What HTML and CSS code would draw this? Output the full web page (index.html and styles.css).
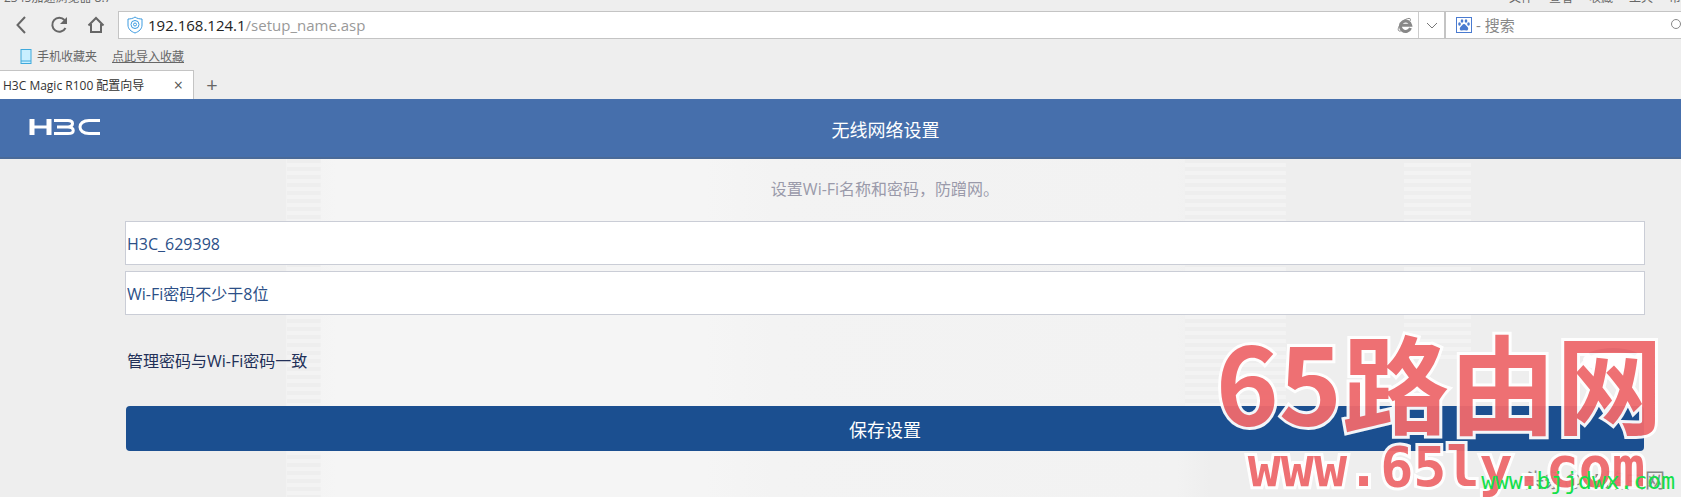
FILE: index.html
```html
<!DOCTYPE html>
<html lang="zh-CN">

<head>
    <meta charset="utf-8">
    <meta name="viewport" content="width=device-width, initial-scale=1.0">
    <title>H3C Magic R100 配置向导</title>
    <link rel="stylesheet" href="styles.css">
</head>

<body>
    <div class="browser">
        <div class="titlebar">
            <span>2345加速浏览器 8.7</span>
            <nav class="menu"><a href="#">文件</a><a href="#">查看</a><a href="#">收藏</a><a href="#">工具</a><a href="#">帮助</a></nav>
        </div>
        <div class="toolbar">
            <div class="nav">
                <button type="button" aria-label="后退"><svg width="18" height="18" viewBox="0 0 18 18"><path d="M12 1L4.500 9l7.500 8" /></svg></button>
                <button type="button" aria-label="刷新"><svg width="18" height="18" viewBox="0 0 18 18"><path d="M14.500 4A7 7 0 1 0 15.500 12" /><path class="solid" d="M17 1v7h-7z" /></svg></button>
                <button type="button" aria-label="主页"><svg width="18" height="18" viewBox="0 0 18 18"><path d="M1.500 9.500L9 2l7.500 7.500M4 8v8h10V8" /></svg></button>
            </div>
            <div class="address">
                <svg class="shield" width="16" height="18" viewBox="0 0 16 18"><path d="M8 1c2 1.500 4.500 2 7 2v6c0 4-3 6.500-7 8-4-1.500-7-4-7-8V3c2.500 0 5-.5 7-2z" /><circle cx="8" cy="8.500" r="4" /><circle cx="8" cy="8.500" r="1.500" /></svg>
                <span class="url"><b>192.168.124.1</b>/setup_name.asp</span>
                <svg class="core" width="16" height="16" viewBox="0 0 16 16"><path d="M13.500 11A5.200 5.200 0 1 1 13.700 8.200H4" /><path class="orbit" d="M13 4c2-4-3-3-7 0-4 4-6 9-4 10 1 .5 3-.5 4-1.500" /></svg>
                <button class="drop" type="button" aria-label="历史网址"><svg width="12" height="8" viewBox="0 0 12 8"><path d="M1 1l5 5 5-5" /></svg></button>
            </div>
            <div class="search">
                <svg class="paw" width="16" height="16" viewBox="0 0 16 16"><rect x=".5" y=".5" width="15" height="15" /><ellipse cx="3.500" cy="7" rx="1.300" ry="1.800" /><ellipse cx="6" cy="4" rx="1.300" ry="1.800" /><ellipse cx="10" cy="4" rx="1.300" ry="1.800" /><ellipse cx="12.500" cy="7" rx="1.300" ry="1.800" /><path d="M8 7c1.500 0 2.300 2 3.500 3 1.500 1.500.5 4-1.500 3.500-1.300-.4-2.700-.4-4 0-2 .5-3-2-1.500-3.500C5.700 9 6.500 7 8 7z" /></svg>
                <span>-</span>
                <input type="text" placeholder="搜索" aria-label="搜索">
                <svg class="glass" width="11" height="14" viewBox="0 0 11 14"><circle cx="6" cy="6" r="4.500" /></svg>
            </div>
        </div>
        <div class="bookmarks">
            <svg width="12" height="15" viewBox="0 0 12 15"><rect x="1" y=".5" width="10" height="14" /><path d="M1 12h10" /></svg>
            <a href="#">手机收藏夹</a>
            <a class="import" href="#">点此导入收藏</a>
        </div>
        <div class="tabs">
            <div class="tab"><span>H3C Magic R100 配置向导</span><button type="button" aria-label="关闭">×</button></div>
            <button class="add" type="button" aria-label="新标签页">+</button>
        </div>
    </div>

    <header class="header">
        <svg class="logo" width="74" height="18" viewBox="0 0 74 18" role="img" aria-label="H3C"><path class="stem" d="M4 1v16M21 1v16" /><path d="M4 9h17M26 2.500h14c6 0 6 6 0 6.500H29M40 9c7 .5 7 6.500 0 6.500H26M72 2.500H61c-12 0-12 13 0 13h11" /></svg>
        <h1>无线网络设置</h1>
    </header>

    <main class="page">
        <form class="setup">
            <p class="tip">设置Wi-Fi名称和密码，防蹭网。</p>
            <input class="field" type="text" value="H3C_629398" aria-label="Wi-Fi名称">
            <input class="field" type="text" placeholder="Wi-Fi密码不少于8位" aria-label="Wi-Fi密码">
            <div class="same">
                <label for="same">管理密码与Wi-Fi密码一致</label>
                <input id="same" type="checkbox" checked>
            </div>
            <button class="save" type="submit">保存设置</button>
        </form>
    </main>

    <div class="source">头条@65路由网</div>
    <div class="mark">
        <div class="mark-name"><span>65</span><span>路</span><span>由</span><span>网</span></div>
        <div class="mark-url">www.65ly.com</div>
    </div>
    <div class="stamp">www.bjjdwx.com</div>
</body>

</html>
```
FILE: styles.css
```css
* {
    box-sizing: border-box;
}

body {
    position: relative;
    display: flex;
    flex-direction: column;
    min-height: 100vh;
    margin: 0;
    overflow: hidden;
    background: #eee;
    font-family: "Open Sans", "Noto Sans CJK SC", sans-serif;
}

button,
input {
    padding: 0;
    border: 0;
    background: none;
    font: inherit;
    outline: none;
}

a {
    color: inherit;
    text-decoration: none;
}

svg {
    flex: none;
    fill: none;
}

/* browser */
.browser {
    color: #666;
    font-size: 12px;
}

.titlebar {
    display: flex;
    justify-content: space-between;
    align-items: flex-end;
    height: 4px;
    margin-bottom: 7px;
    padding-left: 4px;
    overflow: hidden;
    line-height: 12px;
}

.menu {
    display: flex;
    gap: 16px;
    margin-right: -12px;
}

.toolbar {
    display: flex;
    height: 28px;
}

.nav {
    display: flex;
    align-items: center;
    gap: 19px;
    width: 118px;
    padding-left: 13px;
}

.nav button {
    height: 18px;
}

.nav svg {
    stroke: #666;
    stroke-width: 2;
}

.nav .solid {
    fill: #666;
    stroke: none;
}

.address,
.search {
    display: flex;
    align-items: center;
    border: 1px solid #c4c4c4;
    background: #fff;
}

.address {
    flex: 1;
    padding-left: 8px;
}

.shield {
    stroke: #3d9be0;
}

.url {
    flex: 1;
    margin-left: 5px;
    color: #999;
    font-size: 15px;
}

.url b {
    color: #222;
    font-weight: normal;
}

.core {
    margin-right: 5px;
    stroke: #888;
    stroke-width: 3;
}

.core .orbit {
    stroke-width: 1;
}

.drop {
    width: 26px;
    height: 26px;
    border-left: 1px solid #ccc;
}

.drop svg {
    stroke: #777;
}

.search {
    gap: 4px;
    width: 236px;
    padding-left: 10px;
    border-right: 0;
    color: #888;
    font-size: 15px;
}

.search input {
    flex: 1;
    min-width: 0;
}

.search input::placeholder {
    color: #888;
}

.paw {
    fill: #4a7bd0;
}

.paw rect {
    fill: #fff;
    stroke: #4a7bd0;
}

.glass {
    stroke: #888;
}

.bookmarks {
    display: flex;
    align-items: center;
    height: 31px;
    padding: 3px 0 0 20px;
}

.bookmarks svg {
    margin-right: 5px;
    fill: #c9efff;
    stroke: #3fa9dc;
}

.import {
    margin-left: 15px;
    text-decoration: underline;
}

.tabs {
    display: flex;
    height: 29px;
}

.tab {
    display: flex;
    justify-content: space-between;
    align-items: center;
    width: 194px;
    padding: 0 10px 0 3px;
    border: 1px solid #c4c4c4;
    border-width: 1px 1px 0 0;
    background: #fff;
    color: #333;
}

.tab button {
    color: #555;
    font-size: 16px;
}

.add {
    width: 36px;
    color: #666;
    font-size: 20px;
    line-height: 28px;
}

/* page */
.header {
    position: relative;
    height: 60px;
    padding-left: 90px;
    border-bottom: 2px solid #4a6a98;
    background: #466fac;
    color: #fff;
    text-align: center;
}

.logo {
    position: absolute;
    top: 19px;
    left: 28px;
    stroke: #fff;
    stroke-width: 3;
}

.logo .stem {
    stroke-width: 5;
}

.header h1 {
    margin: 0;
    font-size: 18px;
    font-weight: normal;
    line-height: 62px;
}

.page {
    flex: 1;
    padding: 0 36px 0 125px;
    background:
        repeating-linear-gradient(#eee 0 4px, #f3f3f3 4px 8px) 17.400% 0 / 2% 100% no-repeat,
        repeating-linear-gradient(#eee 0 4px, #f3f3f3 4px 8px) 75% 0 / 6% 75% no-repeat,
        repeating-linear-gradient(#eee 0 4px, #f3f3f3 4px 8px) 87% 0 / 4% 60% no-repeat,
        linear-gradient(90deg, #eee 17%, #f2f2f2 17%, #f5f5f5 20%, #f5f5f5 42%, #f3f3f3 46%, #f2f2f2 70%, #eee 72%);
}

.setup {
    display: flex;
    flex-direction: column;
}

.tip {
    margin: 0 0 2px;
    color: #9a9aaa;
    font-size: 16px;
    line-height: 60px;
    text-align: center;
}

.field {
    height: 44px;
    margin-bottom: 6px;
    padding: 1px 0 0 1px;
    border: 1px solid #cacdd6;
    background: #fff;
    color: #2c4f87;
    font-size: 16px;
}

.field::placeholder {
    color: #2c4f87;
}

.same {
    display: flex;
    justify-content: space-between;
    align-items: center;
    height: 78px;
    margin-bottom: 7px;
    padding: 0 2px;
    color: #223058;
    font-size: 16px;
}

.same input {
    width: 60px;
    height: 24px;
    margin: 0;
    border: 4px solid #1b4f90;
    border-color: #1b4f90 #fff #fff;
    border-radius: 50%;
    background: #fff;
    appearance: none;
}

.save {
    height: 45px;
    margin: 0 1px;
    border-radius: 4px;
    background: #1b4f90;
    color: #fff;
    font-size: 18px;
}

/* watermarks */
.mark {
    position: absolute;
    right: 18px;
    bottom: 0;
    color: #ef6a6d;
    opacity: .95;
    paint-order: stroke fill;
    -webkit-text-stroke: 6px #fff;
}

.mark-name {
    display: flex;
    font: bold 107px/114px "Noto Sans CJK SC", sans-serif;
}

.mark-url {
    padding-left: 32px;
    font: bold 55px/60px "DejaVu Sans Mono", monospace;
}

.source,
.stamp {
    position: absolute;
    right: 6px;
    bottom: 3px;
}

.source {
    right: 16px;
    color: #888;
    font-size: 20px;
    line-height: 26px;
}

.stamp {
    color: #14e04a;
    font: 23px/26px "DejaVu Sans Mono", monospace;
}
```
